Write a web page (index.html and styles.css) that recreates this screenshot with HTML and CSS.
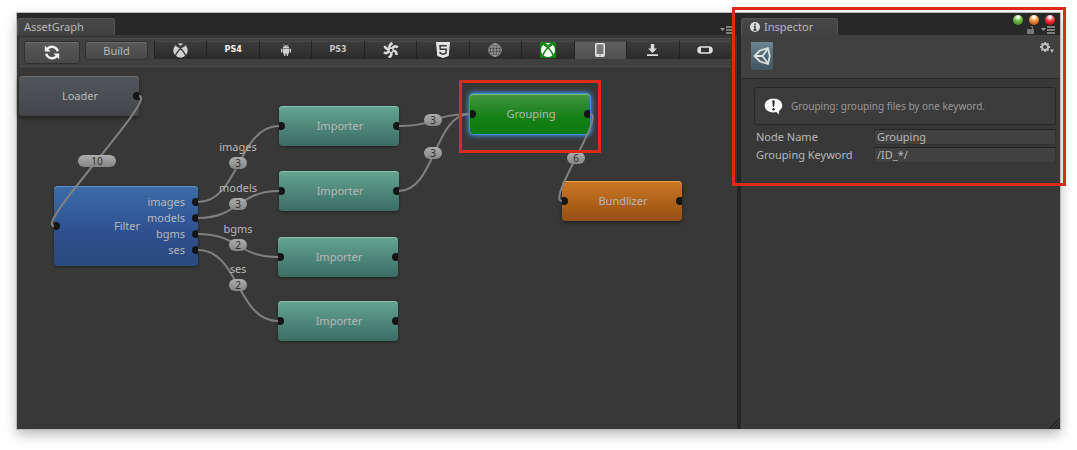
FILE: index.html
```
<!DOCTYPE html>
<html lang="en">
<head>
<meta charset="utf-8">
<meta name="viewport" content="width=device-width, initial-scale=1">
<title>AssetGraph</title>
<link rel="stylesheet" href="styles.css">
</head>
<body>
<main class="window">
  <section class="pane graph-pane">
    <header class="tab-bar">
      <button class="tab tab-graph" type="button">AssetGraph</button>
      <button class="icon-button pane-menu" type="button" aria-label="Pane menu">
        <svg width="14" height="8" viewBox="0 0 14 8"><path d="M0 2h5L2.500 5z" fill="#999"/><path d="M6 1h8M6 4h8M6 7h8" stroke="#999" stroke-width="1.400"/></svg>
      </button>
    </header>
    <nav class="toolbar" aria-label="Build toolbar">
      <button class="tool refresh" type="button" aria-label="Reload">
        <svg width="16" height="15" viewBox="0 0 16 15"><g fill="none" stroke="#f2f2f2" stroke-width="2.400"><path d="M13.800 6.200C12.600 1.600 6.300.2 3 4"/><path d="M2.200 8.800C3.400 13.400 9.700 14.800 13 11"/></g><path d="M.8.800v5.800h5.800zM15.200 14.200V8.400H9.400z" fill="#f2f2f2"/></svg>
      </button>
      <button class="tool build" type="button">Build</button>
      <div class="platforms">
        <button class="platform" type="button" aria-label="Xbox 360">
          <svg width="15" height="15" viewBox="0 0 15 15"><circle cx="7.500" cy="7.500" r="7.200" fill="#d2d2d2"/><path d="M3 1.500C5 1.500 6.500 2.600 7.500 3.600 8.500 2.600 10 1.500 12 1.500M3 2.300C6.500 4 11 8.500 12.800 13M12 2.300C8.500 4 4 8.500 2.200 13" fill="none" stroke="#373737" stroke-width="1.300"/></svg>
        </button>
        <button class="platform console" type="button">PS4</button>
        <button class="platform" type="button" aria-label="Android">
          <svg width="10" height="12" viewBox="0 0 10 12" fill="#cfcfcf"><path d="M2 4C2 .2 8 .2 8 4zM2 4.600h6v4.800H2z"/><rect x="0" y="4.600" width="1.400" height="4" rx=".7"/><rect x="8.600" y="4.600" width="1.400" height="4" rx=".7"/><rect x="2.900" y="8" width="1.500" height="4" rx=".7"/><rect x="5.600" y="8" width="1.500" height="4" rx=".7"/><path d="M2.500.3l1 1.400M7.500.3l-1 1.400" stroke="#cfcfcf" stroke-width=".6"/><path d="M3.400 2.300h.8v.8h-.8zM5.800 2.300h.8v.8h-.8z" fill="#333"/></svg>
        </button>
        <button class="platform console dim" type="button">PS3</button>
        <button class="platform" type="button" aria-label="Tizen">
          <svg width="16" height="16" viewBox="0 0 16 16" fill="none" stroke="#dadada" stroke-width="2.600"><path d="M7 6.500C5.500 4 7.500 1.800 9.500 1M9.300 6.300C10.800 3.500 13.500 4.200 14.800 5.500M10 8.500C13 8.800 13.800 11 13.300 13M8 10.300C9 13 7.500 14.800 5.500 15.500M6 8.500C5 11.500 2.500 11.500.8 10.500M6.200 7C4 7.500 2 6 1.800 3.800"/><circle cx="8" cy="8.300" r="2.200" stroke-width="1.200"/></svg>
        </button>
        <button class="platform" type="button" aria-label="HTML5">
          <svg width="14" height="16" viewBox="0 0 14 16"><path d="M0 0h14l-1.300 14L7 16l-5.700-2z" fill="#e4e4e4"/><path d="M10.800 3.800H4l.3 3.500h6l-.4 4L7 12.300l-2.800-1-.1-1.600" fill="none" stroke="#3a3a3a" stroke-width="1.500"/></svg>
        </button>
        <button class="platform" type="button" aria-label="Web">
          <svg width="14" height="14" viewBox="0 0 14 14" fill="none" stroke="#a6a6a6" stroke-width="1"><circle cx="7" cy="7" r="6.200"/><ellipse cx="7" cy="7" rx="3.200" ry="6.200"/><path d="M7 .8v12.400M.8 7h12.400M1.800 4h10.400M1.800 10h10.400"/></svg>
        </button>
        <button class="platform" type="button" aria-label="Xbox One">
          <svg width="16" height="16" viewBox="0 0 16 16"><path d="M0 0h16v16H0z" fill="#138113"/><circle cx="8" cy="8" r="7" fill="#fff"/><path d="M4 1.800C6 2 7 2.900 8 3.800 9 2.900 10 2 12 1.800M3.500 2.600C7 4.500 11.500 9 13 13M12.500 2.600C9 4.500 4.500 9 3 13" fill="none" stroke="#138113" stroke-width="1.500"/></svg>
        </button>
        <button class="platform selected" type="button" aria-label="iOS" aria-pressed="true">
          <svg width="10" height="14" viewBox="0 0 10 14"><rect x=".8" y=".8" width="8.400" height="12.400" rx="1" fill="#777" stroke="#dedede" stroke-width="1.600"/><path d="M1 12h8" stroke="#dedede" stroke-width="2"/><path d="M4.300 12h1.400" stroke="#666"/></svg>
        </button>
        <button class="platform" type="button" aria-label="Standalone">
          <svg width="11" height="12" viewBox="0 0 11 12" fill="#dadada"><path d="M3.800 0h3.400v4.500H10L5.500 9 1 4.500h2.800zM0 10.300h11V12H0z"/></svg>
        </button>
        <button class="platform" type="button" aria-label="PS Vita">
          <svg width="16" height="8" viewBox="0 0 16 8"><rect x="1" y="1" width="14" height="6" rx="3" fill="#dedede" stroke="#dedede" stroke-width="1.600"/><path d="M4 1.800h8v4.400H4z" fill="#333"/></svg>
        </button>
      </div>
    </nav>
    <div class="canvas">
      <article class="node gray loader">Loader<i class="port out"></i></article>
      <article class="node blue filter">Filter<i class="port in"></i>
        <ul class="outputs">
          <li>images<i class="port out"></i></li>
          <li>models<i class="port out"></i></li>
          <li>bgms<i class="port out"></i></li>
          <li>ses<i class="port out"></i></li>
        </ul>
      </article>
      <article class="node teal importer-images">Importer<i class="port in"></i><i class="port out"></i></article>
      <article class="node teal importer-models">Importer<i class="port in"></i><i class="port out"></i></article>
      <article class="node teal importer-bgms">Importer<i class="port in"></i><i class="port out"></i></article>
      <article class="node teal importer-ses">Importer<i class="port in"></i><i class="port out"></i></article>
      <article class="node green grouping">Grouping<i class="port in"></i><i class="port out"></i></article>
      <article class="node orange bundlizer">Bundlizer<i class="port in"></i><i class="port out"></i></article>
      <svg class="edges" aria-hidden="true">
        <path d="M122 29C142 29 17 159 37 159"/>
        <path d="M181 135C222 135 221 59 262 59"/>
        <path d="M181 151C222 151 221 124 262 124"/>
        <path d="M181 167C222 167 220 190 261 190"/>
        <path d="M181 183C222 183 220 254 261 254"/>
        <path d="M382 59C418 59 417 47 453 47"/>
        <path d="M382 124C418 124 417 47 453 47"/>
        <path d="M573 47C589 47 529 134 545 134"/>
      </svg>
      <span class="badge wide e-loader">10</span>
      <span class="edge-label e-images">images<b class="badge">3</b></span>
      <span class="edge-label e-models">models<b class="badge">3</b></span>
      <span class="edge-label e-bgms">bgms<b class="badge">2</b></span>
      <span class="edge-label e-ses">ses<b class="badge">2</b></span>
      <span class="badge e-group-a">3</span>
      <span class="badge e-group-b">3</span>
      <span class="badge e-bundle">6</span>
      <div class="highlight highlight-node"></div>
    </div>
  </section>

  <aside class="pane inspector">
    <header class="tab-bar">
      <button class="tab tab-inspector" type="button">
        <svg width="10" height="10" viewBox="0 0 10 10"><circle cx="5" cy="5" r="5" fill="#dedede"/><path d="M5 1.500v1.600M3.800 4.500H5V8M3.500 8h3" fill="none" stroke="#303030" stroke-width="1.400"/></svg>
        Inspector
      </button>
      <div class="window-tools">
        <div class="lights">
          <button class="light light-green" type="button" aria-label="Zoom"></button>
          <button class="light light-orange" type="button" aria-label="Minimize"></button>
          <button class="light light-red" type="button" aria-label="Close"></button>
        </div>
        <div class="pane-tools">
          <button class="icon-button" type="button" aria-label="Lock">
            <svg width="8" height="8" viewBox="0 0 8 8"><path d="M0 3h7v5H0z" fill="#777"/><path d="M5.500 3V.5H3.500" fill="none" stroke="#777"/></svg>
          </button>
          <button class="icon-button" type="button" aria-label="Inspector menu">
            <svg width="14" height="8" viewBox="0 0 14 8"><path d="M0 2h5L2.500 5z" fill="#999"/><path d="M6 1h8M6 4h8M6 7h8" stroke="#999" stroke-width="1.400"/></svg>
          </button>
        </div>
      </div>
    </header>
    <div class="asset-header">
      <svg width="22" height="28" viewBox="0 0 22 28"><defs><linearGradient id="tile" x2="0" y2="1"><stop stop-color="#6d8792"/><stop offset=".5" stop-color="#526873"/><stop offset="1" stop-color="#425660"/></linearGradient></defs><path d="M0 0h22v28H0z" fill="url(#tile)"/><path d="M3.500 14L9 8.500l8-2.500 1.800 8L17 22l-8-2.500zM11.500 14L17 6.500M11.500 14l5.500 7.500M11.500 14H4" fill="none" stroke="#d9dfe1" stroke-width="1.800" stroke-linejoin="round"/></svg>
      <button class="icon-button" type="button" aria-label="Component settings">
        <svg width="14" height="12" viewBox="0 0 14 12"><circle cx="5" cy="5" r="3" fill="none" stroke="#bdbdbd" stroke-width="1.800"/><path d="M5 0v2M5 8v2M0 5h2M8 5h2M1.500 1.500l1.300 1.300M7.200 7.200l1.300 1.300M1.500 8.500l1.300-1.300M7.200 2.800l1.300-1.300" stroke="#bdbdbd" stroke-width="1.800"/><path d="M10 7.500h4l-2 3.500z" fill="#bdbdbd"/></svg>
      </button>
    </div>
    <form class="properties">
      <p class="help">
        <svg width="19" height="17" viewBox="0 0 19 17"><path d="M9.500.5C4.500.5.700 3.500.700 7.500s3.800 7 8.800 7c1 0 2-.1 2.900-.4L15 16.500v-3.600c2-1.300 3.300-3.200 3.300-5.400 0-4-3.800-7-8.800-7z" fill="#fafafa"/><path d="M8.200 2.500h2.600l-.7 6.300H8.900z" fill="#222"/><circle cx="9.500" cy="11.300" r="1.200" fill="#222"/></svg>
        Grouping: grouping files by one keyword.
      </p>
      <label class="row">Node Name<input type="text" value="Grouping"></label>
      <label class="row">Grouping Keyword<input type="text" value="/ID_*/"></label>
    </form>
    <svg class="grip" width="12" height="12" viewBox="0 0 12 12" aria-hidden="true"><path d="M1 12L12 1M5 12l7-7M9 12l3-3" stroke="#1c1c1c" stroke-width="1"/></svg>
    <div class="highlight highlight-inspector"></div>
  </aside>
</main>
</body>
</html>
```
FILE: styles.css
```
* { box-sizing: border-box; }

body {
  display: flex;
  min-height: 100vh;
  margin: 0;
  padding: 13px 17px 21px;
  background: #fff;
  color: #b8b8b8;
  font: 11px/16px "Noto Sans", "Open Sans", sans-serif;
}

button, input {
  margin: 0;
  padding: 0;
  border: 0;
  color: inherit;
  font: inherit;
}

button { background: none; }
svg { display: block; flex: none; }

.window {
  display: flex;
  flex: 1;
  gap: 4px;
  background: #252525;
  box-shadow: 0 0 0 1px #bcbcbc, 0 5px 12px rgba(0, 0, 0, 0.3);
}

.pane {
  display: flex;
  flex-direction: column;
  background: #383838;
}

.graph-pane { flex: 1; min-width: 0; }

.tab-bar {
  display: flex;
  align-items: flex-end;
  justify-content: space-between;
  height: 22px;
  padding-right: 5px;
  background: #282828;
}

.graph-pane .tab-bar { padding-right: 3px; }

.tab {
  display: flex;
  align-items: center;
  gap: 4px;
  height: 17px;
  padding: 0 6px;
  border: 1px solid #555;
  border-bottom: 0;
  border-radius: 3px 3px 0 0;
  background: linear-gradient(#484848, #414141);
}

.tab-graph { width: 98px; }
.tab-inspector { width: 97px; padding: 0 8px; }
.icon-button { flex: none; }
.pane-menu { margin-bottom: 1px; }

.toolbar {
  display: flex;
  align-items: flex-start;
  margin: 3px 6px 0 3px;
  padding: 2px 0 3px 4px;
  border: 1px solid #4b4b4b;
  border-right: 0;
  background: #404040;
}

.tool {
  display: flex;
  align-items: center;
  justify-content: center;
  margin-top: 1px;
  border-radius: 3px;
  background: linear-gradient(#595959, #484848);
  box-shadow: inset 0 1px #6b6b6b, 0 0 0 1px #303030;
}

.refresh { width: 54px; height: 21px; }
.build { width: 61px; height: 17px; margin-left: 7px; }

.platforms {
  display: flex;
  flex: 1;
  margin-left: 7px;
}

.platform {
  display: flex;
  flex: 1 1 0;
  align-items: center;
  justify-content: center;
  height: 18px;
  border-left: 1px solid #222;
  background: linear-gradient(#3c3c3c, #2b2b2b);
  box-shadow: inset 0 1px #484848;
}

.platform.selected { background: linear-gradient(#606060, #505050); }
.console { color: #f2f2f2; font: bold 8px/8px "DejaVu Sans", sans-serif; }
.console.dim { color: #c4c4c4; }

.canvas {
  position: relative;
  flex: 1;
}

.node {
  position: absolute;
  display: flex;
  align-items: center;
  justify-content: center;
  width: 120px;
  height: 40px;
  padding-left: 2px;
  overflow: hidden;
  border-radius: 4px;
}

.gray { background: linear-gradient(#52565b, #434549); box-shadow: inset 0 1px #6d7073, 0 2px 4px #202020; }
.blue { background: linear-gradient(#3b6da8, #2f4f8f 60%, #294a7d); box-shadow: inset 0 1px #5d8fc4, 0 1px 3px #202020; }
.teal { background: linear-gradient(#64a591, #3b6c64); box-shadow: inset 0 1px #85c1ae, 0 1px 3px #202020; }
.green { background: linear-gradient(#449440, #128015 60%, #0f7a12); box-shadow: inset 0 1px #7fb87b, 0 0 0 1px #3b8fd8, 0 0 4px 2px #3b8fd8; }
.orange { background: linear-gradient(#cc7722, #945013); box-shadow: inset 0 1px #e9a055, 0 2px 4px #202020; }

.loader { left: 2px; top: 9px; }
.filter { left: 37px; top: 119px; width: 144px; height: 80px; }
.importer-images { left: 262px; top: 39px; }
.importer-models { left: 262px; top: 104px; }
.importer-bgms { left: 261px; top: 170px; }
.importer-ses { left: 261px; top: 234px; }
.grouping { left: 453px; top: 27px; }
.bundlizer { left: 545px; top: 114px; }

.outputs {
  position: absolute;
  top: 8px;
  right: 0;
  margin: 0;
  padding: 0;
  list-style: none;
  text-align: right;
}

.outputs li {
  position: relative;
  padding-right: 13px;
}

.port {
  position: absolute;
  top: calc(50% - 4px);
  width: 8px;
  height: 8px;
  border-radius: 50%;
  background: #151515;
}

.port.in { left: -2px; }
.port.out { right: -2px; }

.edges {
  position: absolute;
  inset: 0;
  width: 100%;
  height: 100%;
  fill: none;
  stroke: #808080;
  stroke-width: 2;
}

.badge {
  width: 18px;
  height: 12px;
  border-radius: 6px;
  background: linear-gradient(#adadad, #858585);
  color: #303030;
  font-size: 10px;
  font-weight: 400;
  line-height: 12px;
  text-align: center;
}

.badge.wide { width: 38px; }
.canvas > .badge { position: absolute; }

.edge-label {
  position: absolute;
  display: flex;
  flex-direction: column;
  align-items: center;
  gap: 2px;
  width: 60px;
}

.e-loader { left: 61px; top: 88px; }
.e-images { left: 191px; top: 72px; }
.e-models { left: 191px; top: 113px; }
.e-bgms { left: 191px; top: 154px; }
.e-ses { left: 191px; top: 194px; }
.e-group-a { left: 407px; top: 47px; }
.e-group-b { left: 407px; top: 80px; }
.e-bundle { left: 550px; top: 85px; }

.highlight {
  position: absolute;
  border: 3px solid #dc2c18;
  pointer-events: none;
}

.highlight-node { left: 442px; top: 13px; width: 142px; height: 73px; }

.inspector {
  position: relative;
  flex: 0 0 319px;
}

.highlight-inspector { inset: -6px -6px auto -9px; height: 179px; }

.window-tools {
  display: flex;
  flex-direction: column;
  align-items: flex-end;
  gap: 1px;
}

.lights { display: flex; gap: 6px; }

.light {
  width: 10px;
  height: 10px;
  border-radius: 50%;
}

.light-green { background: radial-gradient(circle at 50% 20%, #fff 8%, #83d052 35%, #5da436 60%, #4b7f30); }
.light-orange { background: radial-gradient(circle at 50% 20%, #fff 8%, #f7b05d 35%, #d9752c 60%, #9b4b1d); }
.light-red { background: radial-gradient(circle at 50% 20%, #fff 8%, #f66 35%, #e21c24 60%, #981419); }

.pane-tools { display: flex; gap: 6px; padding-bottom: 1px; }

.asset-header {
  display: flex;
  align-items: flex-start;
  justify-content: space-between;
  padding: 7px 6px 8px 10px;
  border-bottom: 1px solid #2b2b2b;
  background: #404040;
}

.properties { padding: 8px 4px 0 13px; }

.help {
  display: flex;
  align-items: center;
  gap: 8px;
  height: 38px;
  margin: 0 0 4px;
  padding: 0 9px;
  border: 1px solid #272727;
  border-radius: 3px;
  background: #3b3b3b;
  color: #999;
  font-size: 10px;
}

.row {
  display: flex;
  align-items: center;
  justify-content: space-between;
  margin-bottom: 2px;
  padding-left: 2px;
}

.row input {
  width: 182px;
  height: 16px;
  padding: 0 2px;
  border: 1px solid #323232;
  border-top-color: #222;
  background: #414141;
}

.grip {
  position: absolute;
  right: 0;
  bottom: 0;
}
```
